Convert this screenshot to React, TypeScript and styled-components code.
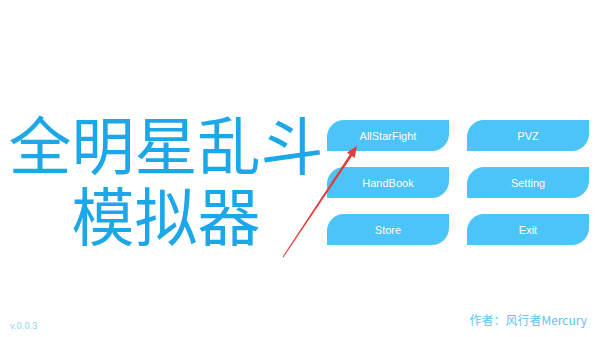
import React from "react";
import styled, { createGlobalStyle } from "styled-components";

const Global = createGlobalStyle`
  html, body { margin: 0; padding: 0; background: #ffffff; }
  body { font-family: "Liberation Sans", Arial, sans-serif; }
`;

const Page = styled.div`
  position: relative;
  width: 600px;
  height: 337px;
  overflow: hidden;
  background: #ffffff;
  display: flex;
  flex-direction: column;
`;

const Main = styled.div`
  display: flex;
  align-items: flex-start;
  padding: 106px 0 0 5px;
`;

const Title = styled.h1`
  margin: 0;
  width: 322px;
  display: flex;
  flex-direction: column;
  align-items: center;
  font-family: "Noto Sans CJK SC", "Noto Sans", sans-serif;
  font-weight: 400;
  font-size: 63px;
  color: #1ba7e8;
`;

const TitleLine = styled.span`
  display: block;
  height: 71px;
  line-height: 71px;
  overflow: visible;
  white-space: nowrap;
`;

const Menu = styled.div`
  display: grid;
  grid-template-columns: repeat(2, 122px);
  grid-auto-rows: 31px;
  column-gap: 18px;
  row-gap: 16px;
  margin-top: 14px;
`;

const MenuButton = styled.button`
  border: none;
  padding: 0;
  background: #4bc4f8;
  color: #ffffff;
  font-family: "Liberation Sans", Arial, sans-serif;
  font-size: 11px;
  border-radius: 17px 0 17px 0;
  display: flex;
  align-items: center;
  justify-content: center;
  cursor: pointer;
`;

const Footer = styled.div`
  margin-top: auto;
  display: flex;
  justify-content: space-between;
  align-items: flex-end;
  padding: 0 12px 5px 10px;
`;

const Version = styled.span`
  font-family: Roboto, "Liberation Sans", sans-serif;
  font-size: 9.5px;
  line-height: 12px;
  color: #8fd2f2;
`;

const Author = styled.span`
  font-family: "Noto Sans CJK SC", "Noto Sans", sans-serif;
  font-size: 12px;
  line-height: 14px;
  margin-bottom: 5px;
  margin-right: 1px;
  color: #5ec4f2;
`;

const Overlay = styled.svg`
  position: absolute;
  left: 0;
  top: 0;
  pointer-events: none;
`;

const buttons = ["AllStarFight", "PVZ", "HandBook", "Setting", "Store", "Exit"];

export default function App() {
  return (
    <>
      <Global />
      <Page>
        <Main>
          <Title>
            <TitleLine>全明星乱斗</TitleLine>
            <TitleLine>模拟器</TitleLine>
          </Title>
          <Menu>
            {buttons.map((b) => (
              <MenuButton key={b}>{b}</MenuButton>
            ))}
          </Menu>
        </Main>
        <Footer>
          <Version>v.0.0.3</Version>
          <Author>作者：风行者Mercury</Author>
        </Footer>
        <Overlay width="600" height="337" viewBox="0 0 600 337">
          <polygon
            fill="#e8393a"
            points="357,146 354.6,157.9 352,156 283.4,257.3 282.6,256.7 349.8,154.4 347,152.5"
          />
        </Overlay>
      </Page>
    </>
  );
}
